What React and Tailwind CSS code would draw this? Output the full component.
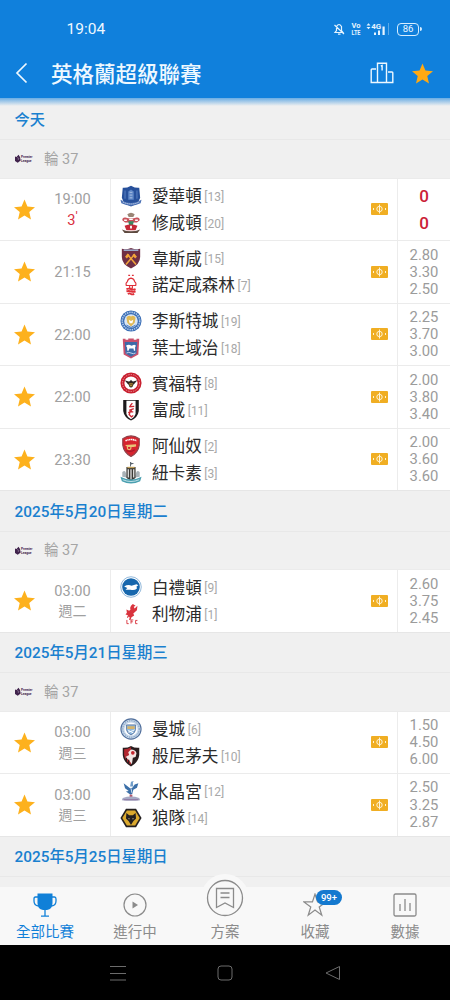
import React from "react";

const STAR = "M12 17.270L18.180 21l-1.640-7.030L22 9.240l-7.190-.610L12 2 9.190 8.630 2 9.240l5.460 4.730L5.820 21z";

// club crests, all drawn on a 24x24 box
const crests = {
  everton: (
    <>
      <path d="M3 3q4 .5 9-2.300q5 2.800 9 2.300l1 11q-2 7-10 9.500q-8-2.500-10-9.500z" fill="#27509b" />
      <path d="M.5 16q11.500 7 23 0l-1 4q-10.500 5-21 0z" fill="#4a70b4" />
      <path d="M9 7l3-2 3 2v9H9z" fill="#5e86c6" />
      <path d="M10.500 8h3M10.500 11h3M10.500 14h3" stroke="#b9cbe8" strokeWidth=".9" />
      <path d="M5.500 6v9M18.500 6v9" stroke="#5e86c6" strokeWidth="1" />
      <path d="M3 18.500q9 4.500 18 0" stroke="#dfe7f4" strokeWidth=".9" fill="none" strokeDasharray="1.500 .7" />
    </>
  ),
  southampton: (
    <>
      <path d="M8 2.500q4-3.500 8 0l-1.500 3h-5z" fill="#9a8575" />
      <path d="M2.500 9q0-3.500 3.500-3 6 2 12 0 3.500-.5 3.500 3l-3 2.500H5.500z" fill="#c9535c" />
      <path d="M4.500 9h3M10 8h4M16.500 9h3" stroke="#fff" strokeWidth="1.400" />
      <path d="M9 10h6l-1 5h-4z" fill="#3b8a63" />
      <path d="M5 15q7-3 14 0l-2 5H7z" fill="#c62837" />
      <path d="M11 15h2v3h-2z" fill="#fff" />
      <path d="M2 19q10 4 20 0l-3 4H5z" fill="#5d493f" />
    </>
  ),
  westham: (
    <>
      <path d="M2 2q5 1 10-1 5 2 10 1v9q0 8-10 12.500Q2 19 2 11z" fill="#6f2f45" />
      <path d="M4 3.500h16" stroke="#9fb4d4" strokeWidth="1.600" />
      <path d="M6.500 19L16 8M17.500 19L8 8" stroke="#f2a53a" strokeWidth="1.700" />
      <path d="M5.500 10.500l3-3.500 2 2-3 3.500zM18.500 10.500l-3-3.500-2 2 3 3.500z" fill="#f2a53a" />
    </>
  ),
  forest: (
    <>
      <path d="M12 4.500q3.500 .5 4 4 2 1 1.200 4H6.800q-.8-3 1.200-4 .5-3.500 4-4zM10.500 12.500h3v3h-3z" fill="none" stroke="#df3039" strokeWidth="1.200" />
      <path d="M9 1.500h2M13 1.500h2" stroke="#df3039" strokeWidth="1.600" />
      <path d="M7 16.500q2.500-1 5 0t5 0M7 19q2.500-1 5 0t5 0M8.500 21.700q2-1 3.500 0t3.500 0" fill="none" stroke="#df3039" strokeWidth="2" />
    </>
  ),
  leicester: (
    <>
      <circle cx="12" cy="12" r="11.500" fill="#3c6fb6" />
      <circle cx="12" cy="12" r="9.500" fill="none" stroke="#b8cfec" strokeWidth="1.600" strokeDasharray="1.500 1" />
      <circle cx="12" cy="12" r="7.400" fill="#dbe7f5" />
      <path d="M7 8.500q2-3.500 5-1.500 3-2 5 1.500l-1 5.500-4 4-4-4z" fill="#e0b955" />
      <path d="M9.500 10.500l2.500 1.500 2.500-1.500-1 4h-3z" fill="#fff" />
      <path d="M7 16.500l5 2.500 5-2.500" stroke="#3c6fb6" fill="none" />
    </>
  ),
  ipswich: (
    <>
      <path d="M3 2h3v1h3V1.500h6V3h3V2h3l-1 17-8 4.500L4 19z" fill="#c9506c" />
      <path d="M5.200 5.500h13.600l-.8 12.500-6 3.500L6 18z" fill="#3d6aa8" />
      <path d="M6.500 9.500q3-2 6 0l3-1 2 1-1 1.500v4h-1.300l-.5-2.500h-4.400l-1 2.500H8l-.3-3.500z" fill="#fff" />
      <path d="M7 17.500q2.500-1.500 5 0t5 0" stroke="#c9d6ec" strokeWidth="1" fill="none" />
    </>
  ),
  brentford: (
    <>
      <circle cx="12" cy="12" r="11.500" fill="#c8202f" />
      <circle cx="12" cy="12" r="9.300" fill="none" stroke="#ec9ca2" strokeWidth="1" strokeDasharray="1.500 1.200" />
      <circle cx="12" cy="12" r="7.200" fill="#fff" />
      <path d="M5 9l5.500 1.500L12 8.500l1.500 2L19 9l-4 4.500H9z" fill="#2c2422" />
      <ellipse cx="12" cy="13.200" rx="2.500" ry="3.700" fill="#2c2422" />
      <path d="M10 13h4M10.500 15h3" stroke="#e9b53a" strokeWidth="1" />
    </>
  ),
  fulham: (
    <>
      <path d="M3.500 1h17v12q-1 7-8.500 10.500Q4.500 20 3.500 13z" fill="#1d1a1b" />
      <path d="M7 1.800h10v14.500q-1 3.500-5 5.700-4-2.200-5-5.700z" fill="#fff" />
      <path d="M13.500 4.500l-2.500 3M15.500 8L10 8.500M15 10.500l-5 2M9 15l4-2.500M14.500 14H11l-1 3 2.500 2.500 2-1.500" stroke="#cf2934" strokeWidth="1.500" fill="none" />
    </>
  ),
  arsenal: (
    <>
      <path d="M3 4q9-6 18 0v7q-1 8-9 12.500Q4 19 3 11z" fill="#d6242e" />
      <path d="M3 4q9-6 18 0v7q-1 8-9 12.500Q4 19 3 11z" fill="none" stroke="#8e4048" strokeWidth="1.200" />
      <path d="M6 6.200q6-2.500 12 0" stroke="#fff" strokeWidth="1.700" fill="none" strokeDasharray="1.500 .5" />
      <path d="M5.500 11l12-.8v2.300l-3 .5H8z" fill="#e8c477" />
      <circle cx="10" cy="14" r="2" fill="none" stroke="#e8c477" strokeWidth="1.300" />
      <path d="M7 17q5 2 9-1" stroke="#a3182a" strokeWidth="1.300" fill="none" />
    </>
  ),
  newcastle: (
    <>
      <path d="M11 0h1v5h-1z" fill="#55606a" />
      <path d="M11.500 .5l4 1-4 1.500z" fill="#55606a" />
      <path d="M2.500 11q3-3 4 1l1 5-5-1zM21.500 11q-3-3-4 1l-1 5 5-1z" fill="#a9b2b7" />
      <path d="M7 5.500h10v12l-5 3-5-3z" fill="#3a3935" />
      <path d="M9 8v9M12 8v11M15 8v9" stroke="#fff" strokeWidth="1.200" />
      <path d="M8 6h8" stroke="#c4a15a" strokeWidth="1.500" />
      <path d="M.5 16q11.500 6 23 0l-1.500 5q-10 5-20 0z" fill="#4a9fb0" />
      <path d="M3 19.300q9 4 18 0" stroke="#d6edf0" strokeWidth=".9" fill="none" />
    </>
  ),
  brighton: (
    <>
      <circle cx="12" cy="12" r="11.200" fill="#fff" stroke="#6b9fce" strokeWidth=".8" />
      <circle cx="12" cy="12" r="9.600" fill="#1767ad" />
      <path d="M4.500 11.500q4-2.500 8-1L18 9l2 1-2 1.500.5 2q-2.500 2.500-7 1.500L6 15l2-2z" fill="#fff" />
    </>
  ),
  liverpool: (
    <>
      <path d="M14 1l3 2-2 1 1 2 3-3-.5 5-4 3.500 1 2-3 2-1 3h-1.500l.5-3-2.500-2.500-2-.5 1.500-2L7 7l3 1.500L11.500 7 11 5.500l1-2.500z" fill="#d9343e" />
      <path d="M10 13l-2 3M13 9l-2 2" stroke="#d9343e" strokeWidth="1.200" />
      <path d="M7.500 18.500v4h2M12 22.500v-4h2.500M12 20.500h2M19 19h-2v3.500h2" stroke="#d9343e" strokeWidth="1" fill="none" />
    </>
  ),
  mancity: (
    <>
      <circle cx="12" cy="12" r="11" fill="#c4d6e9" stroke="#52709c" strokeWidth="1.200" />
      <circle cx="12" cy="12" r="9" fill="none" stroke="#6f8bb2" strokeWidth="1" strokeDasharray="1.300 1.200" />
      <circle cx="12" cy="12" r="7.200" fill="#fff" />
      <path d="M7 7.500h10v5q-.5 4-5 6-4.500-2-5-6z" fill="#8db7dd" />
      <path d="M8 9h8v3H8z" fill="#d7b46a" />
      <path d="M8 16l8-3M9 13.500l6 3" stroke="#fff" strokeWidth="1" />
      <path d="M7 7.500h10v5q-.5 4-5 6-4.500-2-5-6z" fill="none" stroke="#52709c" strokeWidth=".9" />
    </>
  ),
  bournemouth: (
    <>
      <path d="M3 3q5 .5 9-2 4 2.500 9 2v8q-1 8-9 12.500Q4 19 3 11z" fill="#2a1d1e" />
      <path d="M4.500 4.500q4 0 7.500-2v19Q5.500 17.500 4.500 11z" fill="#b3272f" />
      <path d="M12 5q5 0 6 4l-1 4-3 1-1 7-3-4-4-4 4-2-1-3z" fill="#f4e6e4" />
      <circle cx="14" cy="8.500" r="2" fill="#c3272f" />
      <path d="M7 14v4M9.500 16v4" stroke="#2a1d1e" strokeWidth="1.300" />
    </>
  ),
  palace: (
    <>
      <path d="M11 9L4 3.500 5.500 9l4 3-3 .5 5 3.500 2-1 1-4.500 4-2 1.500-5-4 1.500-2.500 3.500z" fill="#3b6fa8" />
      <path d="M11 7l1-5 3-1-1 2 .5 4z" fill="#6f9cc8" />
      <path d="M12 9l1 5" stroke="#dbe7f5" strokeWidth="1" />
      <path d="M10.500 16h3v3h-3z" fill="#b4566b" />
      <path d="M3 19.500q9-3 18 0l1 2.500q-10 1.500-20 0z" fill="#a6a9c4" />
      <path d="M4 21.500h16" stroke="#8b6f9d" strokeWidth="1" />
    </>
  ),
  wolves: (
    <>
      <path d="M6.500 2h11L23.500 12l-6 10h-11l-6-10z" fill="#231f20" />
      <path d="M7.500 3.800h9L21.500 12l-5 8.200h-9L2.500 12z" fill="#dba92e" />
      <path d="M7 6.500L10 9h4l3-2.500 .5 6-3 3-2.500 4-2.500-4-3-3z" fill="#231f20" />
      <path d="M9 12l1.800 .8-1 .8zM15 12l-1.800 .8 1 .8z" fill="#e9d9a8" />
    </>
  ),
};

const sections = [
  {
    date: "今天",
    round: 37,
    matches: [
      { time: "19:00", minute: "3", home: ["愛華頓", 13, "everton"], away: ["修咸頓", 20, "southampton"], score: [0, 0] },
      { time: "21:15", home: ["韋斯咸", 15, "westham"], away: ["諾定咸森林", 7, "forest"], odds: ["2.80", "3.30", "2.50"] },
      { time: "22:00", home: ["李斯特城", 19, "leicester"], away: ["葉士域治", 18, "ipswich"], odds: ["2.25", "3.70", "3.00"] },
      { time: "22:00", home: ["賓福特", 8, "brentford"], away: ["富咸", 11, "fulham"], odds: ["2.00", "3.80", "3.40"] },
      { time: "23:30", home: ["阿仙奴", 2, "arsenal"], away: ["紐卡素", 3, "newcastle"], odds: ["2.00", "3.60", "3.60"] },
    ],
  },
  {
    date: "2025年5月20日星期二",
    round: 37,
    matches: [
      { time: "03:00", day: "週二", home: ["白禮頓", 9, "brighton"], away: ["利物浦", 1, "liverpool"], odds: ["2.60", "3.75", "2.45"] },
    ],
  },
  {
    date: "2025年5月21日星期三",
    round: 37,
    matches: [
      { time: "03:00", day: "週三", home: ["曼城", 6, "mancity"], away: ["般尼茅夫", 10, "bournemouth"], odds: ["1.50", "4.50", "6.00"] },
      { time: "03:00", day: "週三", home: ["水晶宮", 12, "palace"], away: ["狼隊", 14, "wolves"], odds: ["2.50", "3.25", "2.87"] },
    ],
  },
  { date: "2025年5月25日星期日", matches: [] },
];

function Star({ className }) {
  return (
    <svg viewBox="2 1.5 20 20" className={className}>
      <path d={STAR} />
    </svg>
  );
}

function StatusBar() {
  return (
    <div className="flex h-[48px] items-center justify-between pt-[10px] pr-[28px] pl-[66.500px]">
      <span className="pt-px text-[15.5px] leading-none">19:04</span>
      <div className="flex items-center">
        <svg viewBox="0 0 12 14" className="h-[14px] w-[12px]" fill="none" stroke="#e6f4ff" strokeWidth="1.200">
          <path d="M3.500 4.500q2.500-4 5 0v4l1.500 2H2L3.500 8.500zM5 12.200h2.500M1.500 3l9.500 9" />
        </svg>
        <svg viewBox="0 0 10 14" className="ml-[6px] h-[14px] w-[10px]" fill="#e6f4ff" fontSize="8" fontWeight="700">
          <text x=".5" y="6.400" textLength="9" lengthAdjust="spacingAndGlyphs">Vo</text>
          <text x=".5" y="13.200" textLength="9" lengthAdjust="spacingAndGlyphs">LTE</text>
        </svg>
        <svg viewBox="0 0 24 14" className="ml-[5px] h-[14px] w-[24px]" fill="#e6f4ff">
          <path d="M.5 3.500L2.500 1.300l2 2.200zM.5 5l2 2.200L4.500 5z" />
          <path d="M8 10.500h2V13h-2zM12 8.500h2V13h-2zM16.500 4.500h2.200V13h-2.200z" />
          <path d="M22 1h1v12h-1z" opacity=".35" />
          <text x="5.300" y="7" fontSize="8" fontWeight="700" textLength="10" lengthAdjust="spacingAndGlyphs">4G</text>
        </svg>
        <div className="ml-[7px] flex items-center">
          <div className="flex h-[13px] w-[22px] items-center justify-center rounded-[4px] border border-[#d6edff] text-[9.500px] leading-none">
            86
          </div>
          <div className="ml-px h-[4px] w-[2px] rounded-r bg-[#d6edff]" />
        </div>
      </div>
    </div>
  );
}

function Header() {
  return (
    <header className="relative h-[98px] shrink-0 bg-[#1080dc] text-[#eef8ff]">
      <StatusBar />
      <div className="flex h-[50px] items-center pr-[17px] pl-[15px]">
        <svg viewBox="0 0 13 22" className="h-[22px] w-[13px]" fill="none" stroke="currentColor" strokeWidth="1.700">
          <path d="M11.500 1.500L2 11l9.500 9.500" />
        </svg>
        <h1 className="ml-[23px] flex-1 pt-[3px] text-[21.500px] leading-none font-medium">英格蘭超級聯賽</h1>
        <svg viewBox="0 0 24 22" className="mr-px h-[22px] w-[24px]" fill="none" stroke="currentColor" strokeWidth="1.400">
          <path d="M7.500 20.500V1.200h9v19.300M6 7H2q-.8 0-.8.800v12.700h21.600v-9.700q0-.8-.8-.8h-4M10.800 4l1.300-.5v5" />
        </svg>
        <Star className="ml-[17px] h-[21px] w-[21px] fill-[#ffa912]" />
      </div>
      <div className="absolute top-full left-0 h-[8px] w-full bg-linear-to-b from-[#1080dc]/60 to-transparent" />
    </header>
  );
}

function RoundRow({ round }) {
  return (
    <div className="flex h-[38.400px] items-center border-t border-[#e8e8e8] pl-[14px] text-[14.5px] text-[#a5a5a5]">
      {round && (
        <>
          <svg viewBox="0 0 19 9" className="h-[9px] w-[19px]">
            <path d="M1 2.500l1.500.5L4.500.8 6 3l.7 3.500-3 2.200L1 7z" fill="#40234c" />
            <path d="M3 3.500l2 1-1 1.500" stroke="#a793ae" strokeWidth=".6" fill="none" />
            <text x="7" y="4.300" fontSize="3.200" fontWeight="700" fill="#40234c">Premier</text>
            <text x="7" y="7.600" fontSize="3.200" fontWeight="700" fill="#40234c">League</text>
          </svg>
          <span className="ml-[11px] pt-[2px] leading-none">輪 {round}</span>
        </>
      )}
    </div>
  );
}

function Team({ team: [name, rank, crest] }) {
  return (
    <div className="flex h-[26.700px] items-center">
      <svg viewBox="0 0 24 24" className="h-[22px] w-[22px]">{crests[crest]}</svg>
      <span className="ml-[10px] pt-[3px] text-[16.600px] leading-none text-[#2b2b2b]">{name}</span>
      <span className="ml-[2.500px] pt-[2px] text-[12px] leading-none text-[#a8a8a8]">[{rank}]</span>
    </div>
  );
}

function Match({ match }) {
  return (
    <div className="flex h-[62.500px] border-t border-[#ebebeb] bg-white">
      <div className="flex w-[110.500px] items-center border-r border-[#ececec] pl-[13.500px]">
        <Star className="h-[21px] w-[21px] fill-[#fdb11d]" />
        <div className="ml-[13.500px] flex w-[49px] flex-col items-center pt-px text-[14.600px] leading-[20.500px] text-[#a0a0a0]">
          <span>{match.time}</span>
          {match.minute && (
            <span className="flex text-[#d9303f]">
              {match.minute}
              <sup className="top-0 text-[13px] leading-[13px]">'</sup>
            </span>
          )}
          {match.day && <span className="text-[14px]">{match.day}</span>}
        </div>
      </div>
      <div className="flex flex-1 flex-col justify-center pl-[9.500px]">
        <Team team={match.home} />
        <Team team={match.away} />
      </div>
      <div className="flex items-center pr-[9px]">
        <svg viewBox="0 0 17 12" className="h-[12px] w-[17px]">
          <rect width="17" height="12" rx="1" fill="#f0ae23" />
          <g stroke="#fff3d4" fill="none">
            <circle cx="8.500" cy="6" r="2.700" />
            <path d="M8.500 1.500v9M2.500 5v2M14.500 5v2" />
          </g>
        </svg>
      </div>
      <div className="flex w-[53px] flex-col items-center justify-center border-l border-[#ececec] pt-px">
        {match.score
          ? match.score.map((s, i) => (
              <span key={i} className="text-[17px] leading-[26.700px] font-medium text-[#cb2237]">{s}</span>
            ))
          : match.odds.map((o, i) => (
              <span key={i} className="text-[14.800px] leading-[17.200px] text-[#9b9b9b]">{o}</span>
            ))}
      </div>
    </div>
  );
}

function Tab({ label, active, children }) {
  return (
    <div className={active ? "flex flex-1 flex-col items-center text-[#1080d8]" : "flex flex-1 flex-col items-center text-[#8b8b8b]"}>
      <div className="relative flex h-[36px] items-center">{children}</div>
      <span className="pt-px text-[14.500px] leading-[18px]">{label}</span>
    </div>
  );
}

function TabBar() {
  return (
    <nav className="relative flex h-[58px] shrink-0 bg-[#f8f8f8]">
      <Tab label="全部比賽" active>
        <svg viewBox="0 0 24 24" className="h-[24px] w-[24px]" fill="currentColor">
          <path d="M4.500 .5h15v9.500q0 6-5.500 7h-4q-5.500-1-5.500-7z" />
          <path d="M5 4H2.500Q1 4 1 6v2q0 4.500 4.500 5M19 4h2.500Q23 4 23 6v2q0 4.500-4.500 5M12 15v8M8 23.200h8" fill="none" stroke="currentColor" strokeWidth="1.300" />
        </svg>
      </Tab>
      <Tab label="進行中">
        <svg viewBox="0 0 24 24" className="h-[24px] w-[24px]" fill="none" stroke="currentColor" strokeWidth="1.200">
          <circle cx="12" cy="12" r="11" />
          <path d="M9.500 8.500l5.500 3.500-5.500 3.500z" fill="currentColor" stroke="none" />
        </svg>
      </Tab>
      <Tab label="方案">
        <div className="-mt-[15px] flex h-[48px] w-[48px] items-center justify-center rounded-full bg-[#f8f8f8]">
          <svg viewBox="0 0 38 38" className="h-[38px] w-[38px]" fill="none" stroke="currentColor" strokeWidth="1.300">
            <circle cx="19" cy="19" r="17.500" />
            <path d="M10.500 9.500h17v19L19 24l-8.500 4.500zM14.500 14h9M14.500 18.500h9" />
          </svg>
        </div>
      </Tab>
      <Tab label="收藏">
        <svg viewBox="1.2 1 21.6 21.6" className="h-[24px] w-[24px]" fill="none" stroke="currentColor" strokeWidth="1.100">
          <path d="M12 2l2.300 7H22l-6.200 4.600 2.300 7.400-6.100-4.600L5.900 21l2.300-7.400L2 9h7.700z" />
        </svg>
        <span className="absolute top-[3px] left-[13px] flex h-[14.500px] w-[26px] items-center justify-center rounded-full bg-[#1479cf] text-[9.500px] leading-none font-medium text-white">
          99+
        </span>
      </Tab>
      <Tab label="數據">
        <svg viewBox="0 0 24 24" className="h-[24px] w-[24px]" fill="none" stroke="currentColor" strokeWidth="1.300">
          <rect x="1" y="1" width="22" height="22" rx="1.500" />
          <path d="M7 11v7M12 6v12M17 10v8" />
        </svg>
      </Tab>
    </nav>
  );
}

function SystemNav() {
  return (
    <div className="flex h-[55px] shrink-0 items-center justify-center gap-[91.500px] bg-black text-[#6c6c6c]">
      <svg viewBox="0 0 16 16" className="h-[16px] w-[16px]" stroke="currentColor" strokeWidth="1">
        <path d="M0 1.500h16M0 8.500h16M0 15h16" />
      </svg>
      <svg viewBox="0 0 16 16" className="h-[16px] w-[16px]" fill="none" stroke="currentColor" strokeWidth="1">
        <rect x="1" y="1" width="14" height="14" rx="3" />
      </svg>
      <svg viewBox="0 0 16 16" className="h-[16px] w-[16px]" fill="none" stroke="currentColor" strokeWidth="1" strokeLinejoin="round">
        <path d="M14.500 1.500v13L1 8z" />
      </svg>
    </div>
  );
}

export default function App() {
  return (
    <div className="flex h-[1000px] w-[450px] flex-col overflow-hidden bg-[#f0f0f0] font-[Roboto,'Noto_Sans_CJK_TC',sans-serif]">
      <Header />
      <main className="min-h-0 flex-1 overflow-hidden">
        {sections.map((section, i) => (
          <section key={section.date}>
            <h2
              className={
                i === 0
                  ? "flex h-[41.200px] items-center pt-[4px] pl-[14.500px] text-[15.200px] leading-none font-medium text-[#1a80cf]"
                  : "flex h-[40.600px] items-center border-t border-[#e6e6e6] pt-[3px] pl-[14.500px] text-[15.350px] leading-none font-medium text-[#1a80cf]"
              }
            >
              {section.date}
            </h2>
            <RoundRow round={section.round} />
            {section.matches.map((match) => (
              <Match key={match.home[0]} match={match} />
            ))}
          </section>
        ))}
      </main>
      <TabBar />
      <SystemNav />
    </div>
  );
}
